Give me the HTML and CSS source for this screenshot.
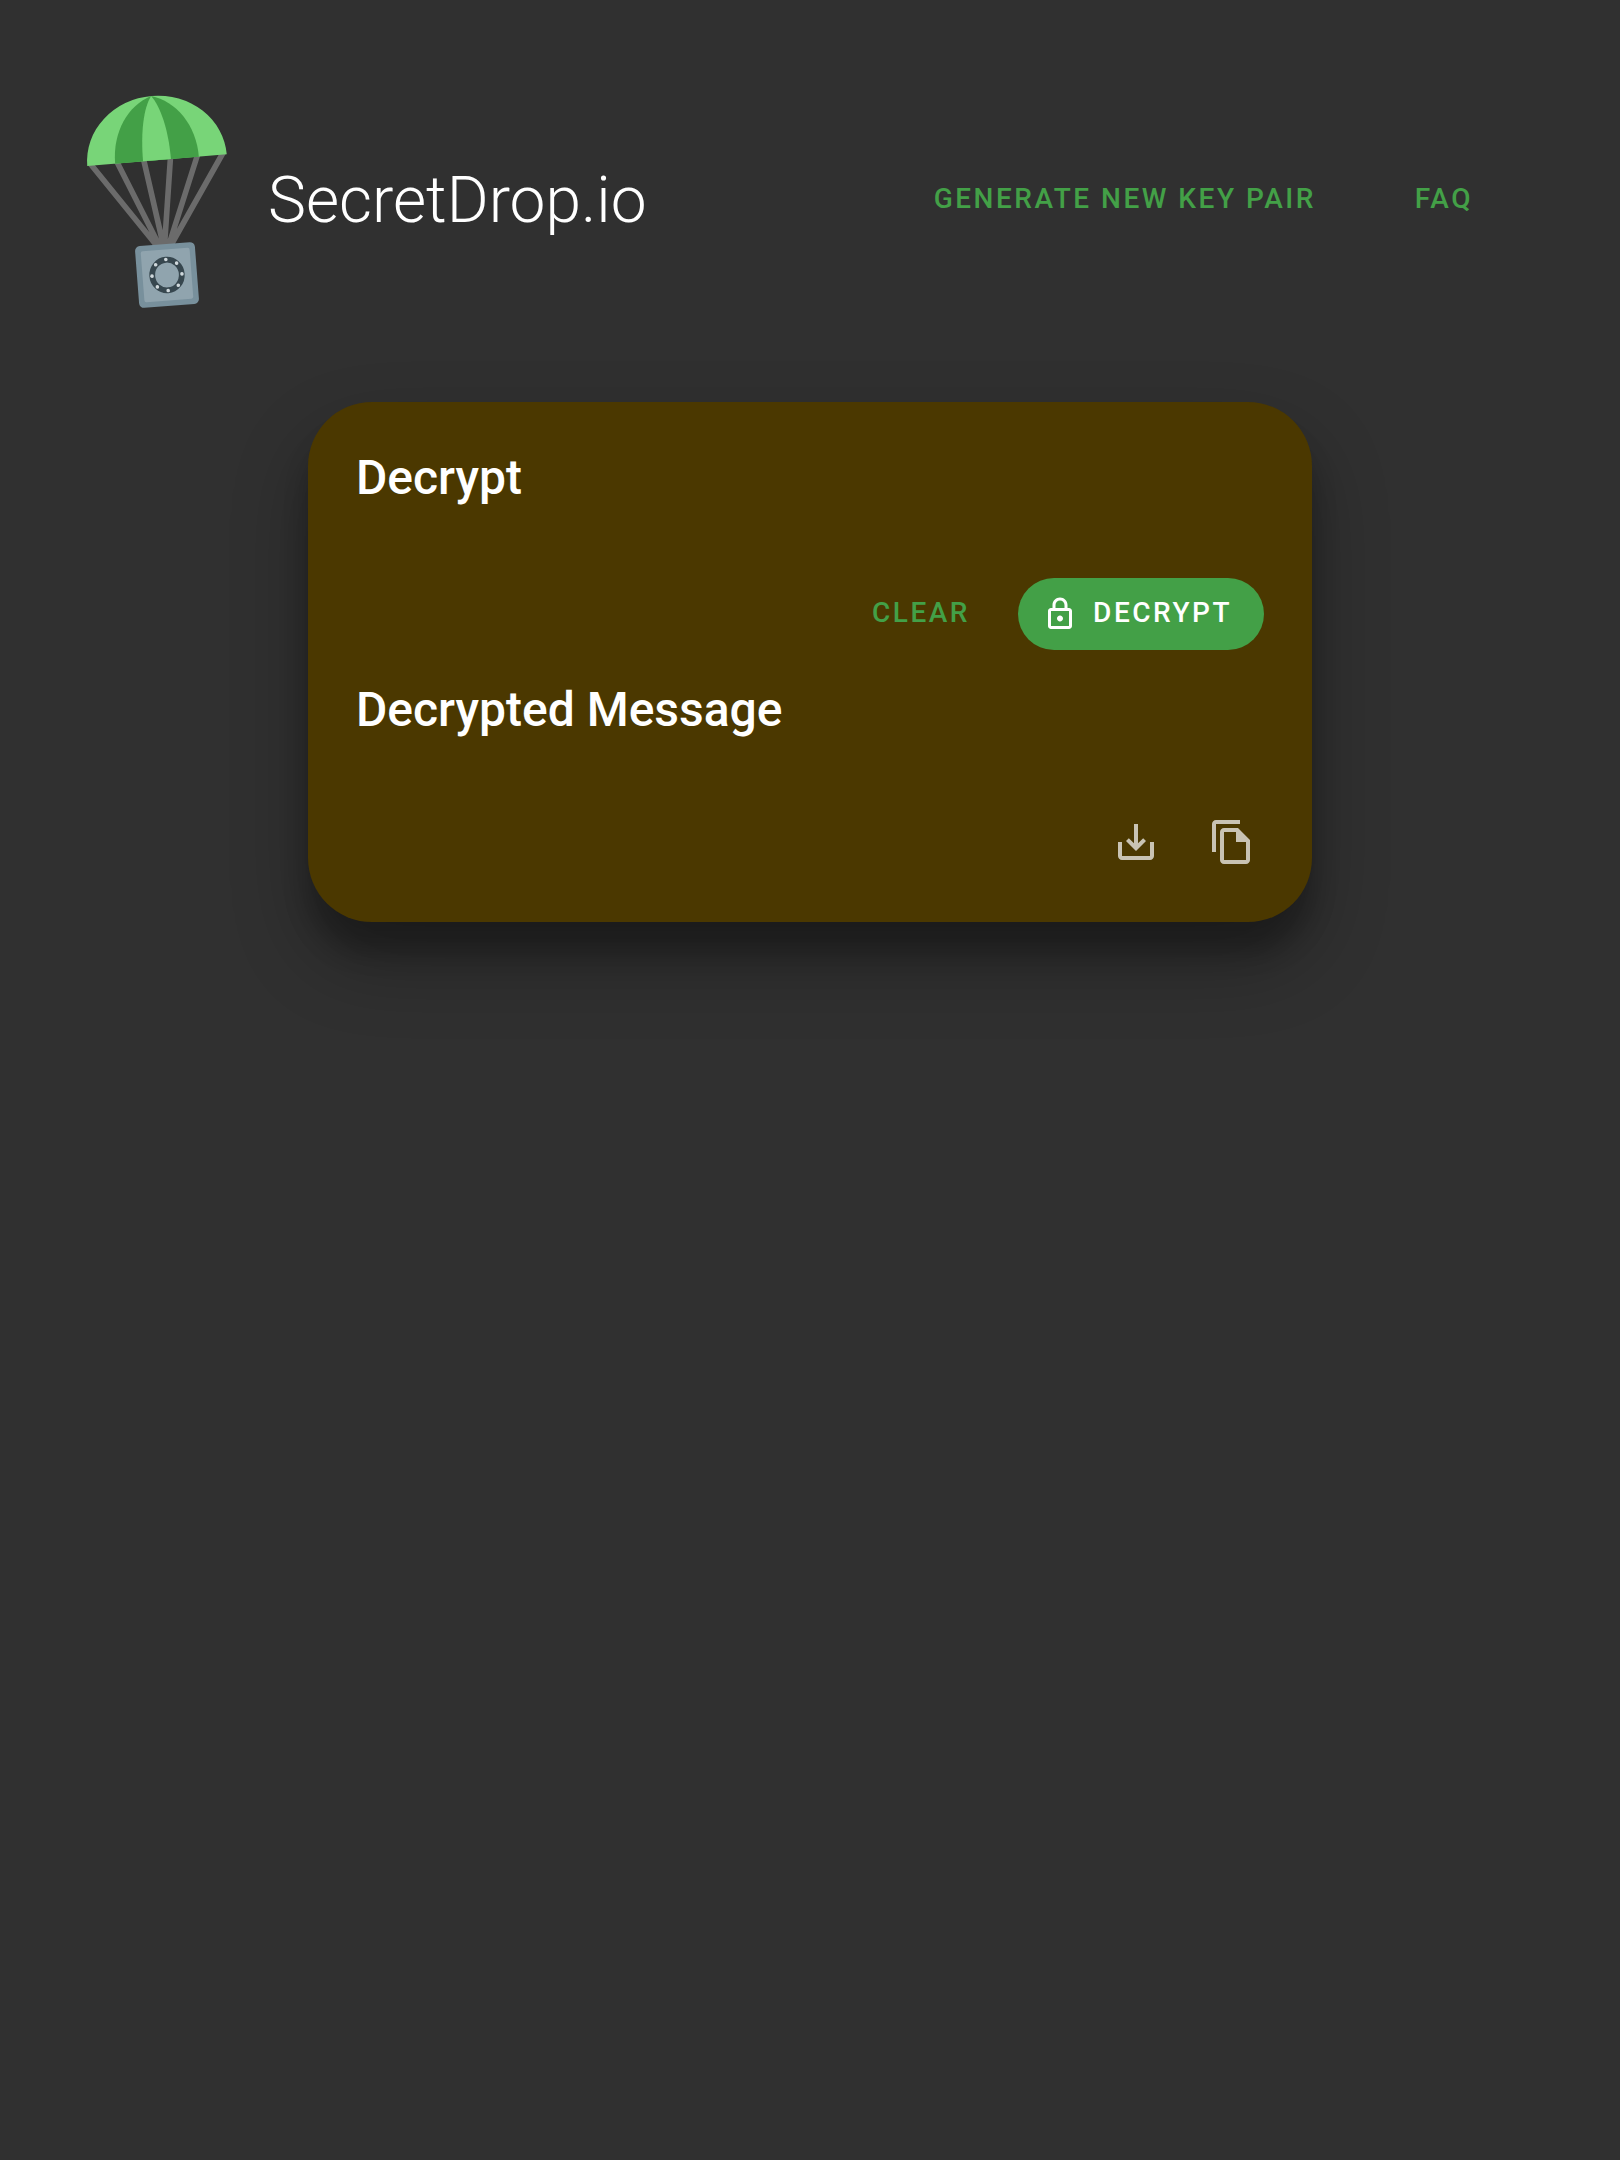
FILE: index.html
```html
<!DOCTYPE html>
<html lang="en">
<head>
<meta charset="utf-8">
<title>SecretDrop.io</title>
<link rel="stylesheet" href="styles.css">
</head>
<body>
<header class="header">
  <svg class="logo" viewBox="80 90 152 224" aria-hidden="true">
    <g stroke="#6b6b6b" stroke-width="5.600">
      <path d="M90.500 164L157 246M116.500 161L159.500 246M143.500 159L163.500 246M170.500 157L164.500 246M197.500 155L168.500 246M223.500 152L170.500 246"/>
    </g>
    <g transform="rotate(-4.8 157 160.200)">
      <path fill="#78d578" d="M87 160.200a70 64.500 0 0 1 140 0z"/>
      <path fill="#43a047" d="M115 160.200C115 128 133 103 156.500 95.700C181 103 199 128 199 160.200z"/>
      <path fill="#78d578" d="M143 160.200C143 131 148 107 156.500 95.700C165 107 171 131 171 160.200z"/>
    </g>
    <g transform="rotate(-4.4 167 275)">
      <rect x="137" y="244" width="60" height="62" rx="5" fill="#78909c"/>
      <rect x="142.500" y="249.500" width="49" height="51" rx="2" fill="#90a4ae"/>
      <ellipse cx="167" cy="275" rx="14.800" ry="15.300" fill="none" stroke="#37474f" stroke-width="5.800"/>
      <g fill="#cfd8dc">
        <circle cx="167" cy="259.400" r="1.800"/><circle cx="177.500" cy="263.900" r="1.800"/>
        <circle cx="182" cy="275" r="1.800"/><circle cx="177.500" cy="286.100" r="1.800"/>
        <circle cx="167" cy="290.600" r="1.800"/><circle cx="156.500" cy="286.100" r="1.800"/>
        <circle cx="152" cy="275" r="1.800"/><circle cx="156.500" cy="263.900" r="1.800"/>
      </g>
    </g>
  </svg>
  <h1 class="title">SecretDrop.io</h1>
  <nav class="nav">
    <a class="btn"><span>Generate new key pair</span></a>
    <a class="btn"><span>FAQ</span></a>
  </nav>
</header>
<main class="card">
  <h2 class="heading">Decrypt</h2>
  <div class="actions">
    <button class="btn"><span>Clear</span></button>
    <button class="btn btn-raised">
      <svg class="btn-icon" viewBox="0 0 24 24" fill="currentColor"><path d="M18 8h-1V6c0-2.760-2.240-5-5-5S7 3.240 7 6v2H6c-1.100 0-2 .9-2 2v10c0 1.100.9 2 2 2h12c1.100 0 2-.9 2-2V10c0-1.100-.9-2-2-2zM9 6c0-1.660 1.340-3 3-3s3 1.340 3 3v2H9V6zm9 14H6V10h12v10zm-6-3c1.100 0 2-.9 2-2s-.9-2-2-2-2 .9-2 2 .9 2 2 2z"/></svg>
      <span>Decrypt</span>
    </button>
  </div>
  <h2 class="heading">Decrypted Message</h2>
  <div class="tools">
    <button class="tool" aria-label="Download">
      <svg viewBox="0 0 24 24" fill="currentColor"><path d="M19 12v7H5v-7H3v7c0 1.100.9 2 2 2h14c1.100 0 2-.9 2-2v-7h-2z"/><path d="M13 12.670l2.590-2.580L17 11.500l-5 5-5-5 1.410-1.410L11 12.670V3h2v9.670z"/></svg>
    </button>
    <button class="tool" aria-label="Copy">
      <svg viewBox="0 0 24 24" fill="currentColor"><path d="M16 1H4c-1.100 0-2 .9-2 2v14h2V3h12V1z"/><path fill-rule="evenodd" d="M15 5H8c-1.100 0-1.990.9-1.990 2L6 21c0 1.100.890 2 1.990 2H19c1.100 0 2-.9 2-2V11l-6-6zM8 21V7h6v5h5v9H8z"/></svg>
    </button>
  </div>
</main>
</body>
</html>
```
FILE: styles.css
```css
* {
  box-sizing: border-box;
}

body {
  margin: 0;
  min-height: 2160px;
  background: #303030;
  color: #fff;
  font-family: Roboto, "Liberation Sans", sans-serif;
}

.header {
  display: flex;
  align-items: center;
  height: 402px;
  padding: 0 131px 0 80px;
}

.logo {
  width: 152px;
  height: 224px;
  margin-top: 2px;
}

.title {
  margin: 0 0 0 36px;
  font-size: 64px;
  font-weight: 300;
  line-height: 80px;
}

.nav {
  display: flex;
  gap: 67px;
  margin: 0 0 2px auto;
}

.btn {
  display: inline-flex;
  align-items: center;
  height: 72px;
  padding: 0 16px;
  border: 0;
  background: none;
  color: #43a047;
  font: 500 28px/36px Roboto, "Liberation Sans", sans-serif;
  letter-spacing: 0.0892857em;
  text-transform: uppercase;
  white-space: nowrap;
}

.btn span {
  padding-bottom: 3px;
}

.card {
  width: 1004px;
  height: 520px;
  margin: 0 auto;
  padding: 44px 48px 32px;
  border-radius: 64px;
  background: #4b3800;
  box-shadow:
    0 38px 76px rgba(0, 0, 0, 0.3),
    0 30px 24px rgba(0, 0, 0, 0.22);
}

.heading {
  margin: 0;
  font-size: 48px;
  font-weight: 500;
  line-height: 64px;
}

.actions {
  display: flex;
  justify-content: flex-end;
  gap: 32px;
  margin: 68px 0 28px;
}

.btn-raised {
  justify-content: space-between;
  width: 246px;
  padding: 0 32px 0 24px;
  border-radius: 36px;
  background: #43a047;
  color: #fff;
}

.btn-icon {
  width: 36px;
  height: 36px;
}

.tools {
  display: flex;
  justify-content: flex-end;
  margin: 52px -16px 0 0;
}

.tool {
  width: 96px;
  height: 96px;
  padding: 24px;
  border: 0;
  background: none;
  color: rgba(255, 255, 255, 0.7);
}

.tool svg {
  display: block;
  width: 48px;
  height: 48px;
}
```
